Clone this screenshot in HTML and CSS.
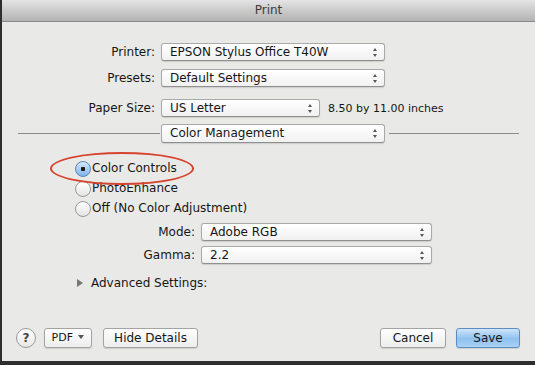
FILE: index.html
```html
<!DOCTYPE html>
<html lang="en">
<head>
    <meta charset="UTF-8">
    <title>Print</title>
    <link rel="stylesheet" href="styles.css">
</head>
<body>
    <div class="window">
        <div class="titlebar">Print</div>

        <div class="content">
            <div class="row top">
                <span class="label">Printer:</span>
                <div class="popup wide">EPSON Stylus Office T40W<span class="arrows"></span></div>
            </div>
            <div class="row top presets">
                <span class="label">Presets:</span>
                <div class="popup wide">Default Settings<span class="arrows"></span></div>
            </div>
            <div class="row top paper">
                <span class="label">Paper Size:</span>
                <div class="popup narrow">US Letter<span class="arrows"></span></div>
                <span class="size">8.50 by 11.00 inches</span>
            </div>

            <div class="section">
                <span class="line left"></span>
                <div class="popup wide">Color Management<span class="arrows"></span></div>
                <span class="line right"></span>
            </div>

            <div class="radios">
                <div class="radio checked">Color Controls</div>
                <div class="radio">PhotoEnhance</div>
                <div class="radio">Off (No Color Adjustment)</div>
                <!-- red marker drawn over the first option -->
                <div class="circle-mark"></div>
            </div>

            <div class="row sub">
                <span class="label">Mode:</span>
                <div class="popup long">Adobe RGB<span class="arrows"></span></div>
            </div>
            <div class="row sub gamma">
                <span class="label">Gamma:</span>
                <div class="popup long">2.2<span class="arrows"></span></div>
            </div>

            <div class="advanced"><span class="tri"></span>Advanced Settings:</div>
        </div>

        <div class="footer">
            <div class="help">?</div>
            <div class="btn pdf">PDF <span class="down"></span></div>
            <div class="btn hide">Hide Details</div>
            <div class="spacer"></div>
            <div class="btn cancel">Cancel</div>
            <div class="btn save">Save</div>
        </div>
    </div>
</body>
</html>
```

FILE: styles.css
```css
* {
    margin: 0;
    padding: 0;
    box-sizing: border-box;
}

html, body {
    height: 100%;
    overflow: hidden;
    background: #e9e9e7;
}

body {
    font-family: 'DejaVu Sans', 'Liberation Sans', sans-serif;
    font-size: 12px;
    color: #161616;
}

.window {
    width: 100%;
    height: 100%;
    background: #e9e9e7;
    border-left: 2px solid #2e2e2e;
    border-bottom: 4px solid #2e2e2e;
    display: flex;
    flex-direction: column;
}

.titlebar {
    height: 22px;
    line-height: 21px;
    text-align: center;
    font-size: 12px;
    color: #3a3a3a;
    background: linear-gradient(#e4e4e4, #c6c6c6 60%, #b4b4b4);
    border-bottom: 1px solid #8a8a8a;
}

.content {
    padding-top: 21px;
    flex: 1;
}

.row {
    display: flex;
    align-items: center;
    height: 18px;
}

.row .label {
    text-align: right;
    margin-right: 6px;
}

.row.top .label {
    width: 153px;
}

.presets {
    margin-top: 8px;
}

.paper {
    margin-top: 12px;
}

.size {
    margin-left: 8px;
    font-size: 11px;
}

.popup {
    position: relative;
    height: 18px;
    line-height: 16px;
    padding-left: 8px;
    background: linear-gradient(#ffffff, #f1f1f1);
    border: 1px solid #a9a9a9;
    border-bottom-color: #8f8f8f;
    border-radius: 3px;
    box-shadow: 0 1px 1px rgba(0, 0, 0, 0.12);
}

.popup.wide {
    width: 224px;
}

.popup.narrow {
    width: 159px;
}

.popup.long {
    width: 231px;
}

.arrows {
    position: absolute;
    right: 6px;
    top: 4px;
    width: 5px;
    height: 9px;
}

.arrows::before,
.arrows::after {
    content: "";
    position: absolute;
    left: 0;
    border-left: 2.5px solid transparent;
    border-right: 2.5px solid transparent;
}

.arrows::before {
    top: 0;
    border-bottom: 3px solid #555;
}

.arrows::after {
    bottom: 0;
    border-top: 3px solid #555;
}

.section {
    display: flex;
    align-items: center;
    margin-top: 7px;
    height: 19px;
}

.section .popup {
    height: 19px;
}

.line {
    height: 1px;
    background: #8c8c8c;
}

.line.left {
    width: 142px;
    margin-left: 16px;
    margin-right: 1px;
}

.line.right {
    width: 130px;
    margin-left: 4px;
}

.radios {
    position: relative;
    margin-top: 15px;
    padding-left: 73px;
}

.radio {
    position: relative;
    height: 20px;
    line-height: 20px;
    padding-left: 17px;
}

.radio::before {
    content: "";
    position: absolute;
    left: 0;
    top: 3px;
    width: 14px;
    height: 14px;
    border-radius: 50%;
    border: 1px solid #9a9a9a;
    background: linear-gradient(#ffffff, #e4e4e4);
}

.radio.checked::before {
    border-color: #5d86b8;
    background: radial-gradient(circle, #1b1b1b 0 2px, transparent 2.5px),
        linear-gradient(#d5e8fb, #7fb4e9);
}

.circle-mark {
    position: absolute;
    left: 48px;
    top: -6px;
    width: 144px;
    height: 33px;
    border: 2.5px solid #d6432e;
    border-radius: 50%;
}

.row.sub {
    margin-top: 5px;
}

.row.sub .label {
    width: 193px;
}

.gamma {
    margin-top: 7px;
}

.advanced {
    display: flex;
    align-items: center;
    margin-top: 11px;
    padding-left: 75px;
    height: 16px;
}

.tri {
    width: 0;
    height: 0;
    border-top: 4px solid transparent;
    border-bottom: 4px solid transparent;
    border-left: 6px solid #777;
    margin-right: 8px;
}

.footer {
    display: flex;
    align-items: center;
    padding: 0 15px 13px 14px;
}

.help {
    width: 20px;
    height: 20px;
    border-radius: 50%;
    border: 1px solid #9a9a9a;
    background: linear-gradient(#ffffff, #e6e6e6);
    text-align: center;
    line-height: 18px;
    font-size: 12px;
    font-weight: bold;
    color: #444;
    margin-right: 8px;
}

.btn {
    height: 20px;
    line-height: 18px;
    text-align: center;
    border: 1px solid #a3a3a3;
    border-radius: 3px;
    background: linear-gradient(#ffffff, #ededed);
    box-shadow: 0 1px 1px rgba(0, 0, 0, 0.12);
}

.pdf {
    width: 48px;
    font-size: 11px;
}

.down {
    display: inline-block;
    border-left: 3px solid transparent;
    border-right: 3px solid transparent;
    border-top: 4px solid #555;
    vertical-align: 2px;
    margin-left: 2px;
}

.hide {
    width: 95px;
    margin-left: 11px;
}

.spacer {
    flex: 1;
}

.cancel {
    width: 66px;
}

.save {
    width: 64px;
    margin-left: 10px;
    border-color: #5b8dc4;
    background: linear-gradient(#cfe5fa, #8ec0ef 55%, #a9d2f6);
}
```
